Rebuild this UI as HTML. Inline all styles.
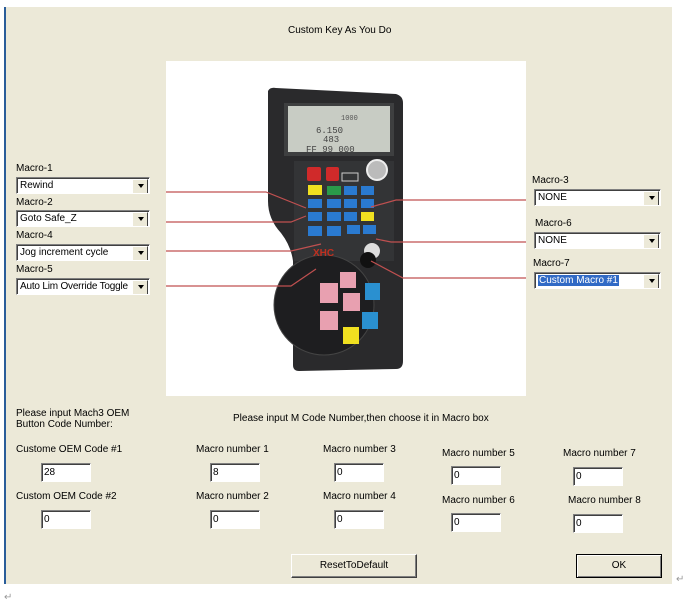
<!DOCTYPE html>
<html><head><meta charset="utf-8"><style>
*{margin:0;padding:0;box-sizing:border-box}
body{width:691px;height:603px;background:#fff;position:relative;overflow:hidden;font-family:"Liberation Sans",sans-serif;font-size:10px;color:#000}
.dlg{position:absolute;left:4px;top:7px;width:668px;height:577px;background:#ece9d8;border-left:2px solid #2a5d9a}
.a{position:absolute;white-space:nowrap}
.sel{position:absolute;height:17px;background:#fff;border:1px solid;border-color:#808080 #fff #fff #808080;box-shadow:inset 1px 1px 0 #404040;padding:2px 0 0 3px;font-size:10px;overflow:hidden;white-space:nowrap}
.sel::after{content:"";position:absolute;right:1px;top:1px;width:14px;height:13px;background:#ece9d8;border:1px solid;border-color:#fff #404040 #404040 #fff}
.sel::before{content:"";position:absolute;right:5px;top:6px;border:3px solid transparent;border-top:4px solid #000;z-index:2}
.inp{position:absolute;width:50px;height:19px;background:#fff;border:1px solid;border-color:#808080 #fff #fff #808080;box-shadow:inset 1px 1px 0 #404040;padding:3px 0 0 2px;font-size:10px}
.btn{position:absolute;background:#ece9d8;border:1px solid;border-color:#fff #404040 #404040 #fff;box-shadow:inset -1px -1px 0 #808080;text-align:center;line-height:21px}
</style></head><body>
<div class="dlg"></div>
<div class="a" style="left:288px;top:25px">Custom Key As You Do</div>
<div style="position:absolute;left:166px;top:61px;width:360px;height:335px;background:#fff"></div>
<svg style="position:absolute;left:166px;top:61px" width="360" height="335">
<path d="M102 30 Q104 26 110 27 L230 33 Q237 35 237 42 L237 300 Q237 308 230 308 L133 310 Q127 310 127 304 L127 200 Q125 185 115 172 Q102 158 102 140 Z" fill="#2a2a2c"/>
<rect x="118" y="42" width="110" height="53" fill="#3e3f40"/>
<rect x="122" y="45" width="102" height="46" fill="#c8ccc4"/>
<rect x="128" y="100" width="100" height="100" fill="#333436"/>
<text x="175" y="59" font-size="7" fill="#555" font-family="Liberation Mono">1000</text>
<text x="150" y="72" font-size="9" fill="#444" font-family="Liberation Mono">6.150</text>
<text x="157" y="81" font-size="9" fill="#444" font-family="Liberation Mono">483</text>
<text x="140" y="91" font-size="9" fill="#444" font-family="Liberation Mono">FF  99    000</text>
<circle cx="158" cy="244" r="50" fill="#1e1e20" stroke="#444"/>
<rect x="141" y="106" width="14" height="14" rx="2" fill="#d02a2a"/>
<rect x="160" y="106" width="13" height="14" rx="2" fill="#d02a2a"/>
<rect x="176" y="112" width="16" height="8" fill="none" stroke="#ccc" stroke-width="1"/>
<circle cx="211" cy="109" r="10" fill="#bbb" stroke="#eee" stroke-width="2"/>
<rect x="142" y="124" width="14" height="10" fill="#f0e020"/>
<rect x="161" y="125" width="14" height="9" fill="#2a9a4a"/>
<rect x="178" y="125" width="13" height="9" fill="#2a7ad0"/>
<rect x="195" y="125" width="13" height="9" fill="#2a7ad0"/>
<rect x="142" y="138" width="14" height="9" fill="#2a7ad0"/>
<rect x="161" y="138" width="14" height="9" fill="#2a7ad0"/>
<rect x="178" y="138" width="13" height="9" fill="#2a7ad0"/>
<rect x="195" y="138" width="13" height="9" fill="#2a7ad0"/>
<rect x="142" y="151" width="14" height="9" fill="#2a7ad0"/>
<rect x="161" y="151" width="14" height="9" fill="#2a7ad0"/>
<rect x="178" y="151" width="13" height="9" fill="#2a7ad0"/>
<rect x="195" y="151" width="13" height="9" fill="#f0e020"/>
<rect x="142" y="165" width="14" height="10" fill="#2a7ad0"/>
<rect x="161" y="165" width="14" height="10" fill="#2a7ad0"/>
<rect x="181" y="164" width="13" height="9" fill="#2a7ad0"/>
<rect x="197" y="164" width="13" height="9" fill="#2a7ad0"/>
<text x="147" y="195" font-size="10" font-weight="bold" fill="#c03020">XHC</text>
<circle cx="206" cy="190" r="8" fill="#ddd"/>
<circle cx="202" cy="199" r="8" fill="#111"/>
<rect x="174" y="211" width="16" height="16" fill="#e8a0b0"/>
<rect x="154" y="222" width="18" height="20" fill="#e8a0b0"/>
<rect x="177" y="232" width="17" height="18" fill="#e8a0b0"/>
<rect x="154" y="250" width="18" height="19" fill="#e8a0b0"/>
<rect x="199" y="222" width="15" height="17" fill="#2a90d0"/>
<rect x="196" y="251" width="16" height="17" fill="#2a90d0"/>
<rect x="177" y="266" width="16" height="17" fill="#f0e020"/>
<g stroke="#c05050" stroke-width="1.2" fill="none">
<path d="M0 131 H100 L140 147"/><path d="M0 161 H125 L140 155"/><path d="M0 190 H125 L155 183"/><path d="M0 225 H125 L150 208"/>
<path d="M360 139 H230 L205 146"/><path d="M360 181 H225 L210 178"/><path d="M360 217 H237 L205 200"/>
</g>
</svg>
<div class="a" style="left:16px;top:163px">Macro-1</div>
<div class="sel" style="left:16px;top:177px;width:134px">Rewind</div>
<div class="a" style="left:16px;top:197px">Macro-2</div>
<div class="sel" style="left:16px;top:210px;width:134px">Goto Safe_Z</div>
<div class="a" style="left:16px;top:230px">Macro-4</div>
<div class="sel" style="left:16px;top:244px;width:134px">Jog increment cycle</div>
<div class="a" style="left:16px;top:264px">Macro-5</div>
<div class="sel" style="left:16px;top:278px;width:134px;letter-spacing:-0.2px">Auto Lim Override Toggle</div>
<div class="a" style="left:532px;top:175px">Macro-3</div>
<div class="sel" style="left:534px;top:189px;width:127px">NONE</div>
<div class="a" style="left:535px;top:218px">Macro-6</div>
<div class="sel" style="left:534px;top:232px;width:127px">NONE</div>
<div class="a" style="left:533px;top:258px">Macro-7</div>
<div class="sel" style="left:534px;top:272px;width:127px"><span style="background:#316ac5;color:#fff;padding:0 1px">Custom Macro #1</span></div>
<div class="a" style="left:16px;top:408px;line-height:11px">Please input Mach3 OEM<br>Button Code Number:</div>
<div class="a" style="left:233px;top:413px">Please input M Code Number,then choose it in Macro box</div>
<div class="a" style="left:16px;top:444px">Custome OEM Code #1</div>
<div class="inp" style="left:41px;top:463px">28</div>
<div class="a" style="left:16px;top:491px">Custom OEM Code #2</div>
<div class="inp" style="left:41px;top:510px">0</div>
<div class="a" style="left:196px;top:444px">Macro number 1</div>
<div class="inp" style="left:210px;top:463px">8</div>
<div class="a" style="left:196px;top:491px">Macro number 2</div>
<div class="inp" style="left:210px;top:510px">0</div>
<div class="a" style="left:323px;top:444px">Macro number 3</div>
<div class="inp" style="left:334px;top:463px">0</div>
<div class="a" style="left:323px;top:491px">Macro number 4</div>
<div class="inp" style="left:334px;top:510px">0</div>
<div class="a" style="left:442px;top:448px">Macro number 5</div>
<div class="inp" style="left:451px;top:466px">0</div>
<div class="a" style="left:442px;top:495px">Macro number 6</div>
<div class="inp" style="left:451px;top:513px">0</div>
<div class="a" style="left:563px;top:448px">Macro number 7</div>
<div class="inp" style="left:573px;top:467px">0</div>
<div class="a" style="left:568px;top:495px">Macro number 8</div>
<div class="inp" style="left:573px;top:514px">0</div>
<div class="btn" style="left:291px;top:554px;width:126px;height:24px">ResetToDefault</div>
<div class="btn" style="left:576px;top:554px;width:86px;height:24px;border:1px solid #000;box-shadow:inset 1px 1px 0 #fff,inset -1px -1px 0 #808080">OK</div>
<div class="a" style="left:676px;top:574px;color:#999">↵</div>
<div class="a" style="left:4px;top:592px;color:#999">↵</div>
</body></html>
